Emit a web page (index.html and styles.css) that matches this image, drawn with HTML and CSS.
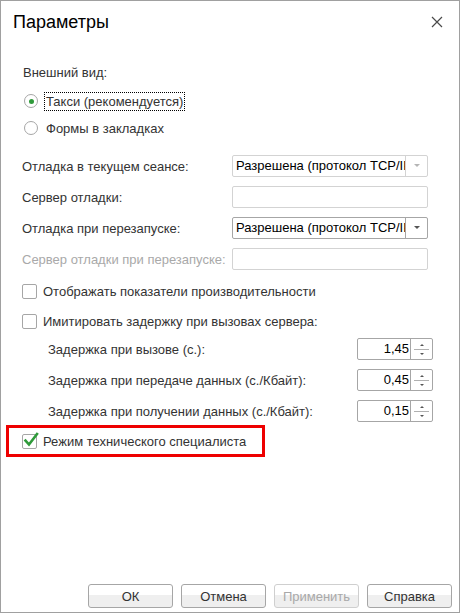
FILE: index.html
```html
<!DOCTYPE html>
<html lang="ru">
<head>
<meta charset="utf-8">
<title>Параметры</title>
<link rel="stylesheet" href="styles.css">
</head>
<body>
<div class="window">
  <div class="titlebar">
    <span class="title">Параметры</span>
    <span class="close">
      <svg width="12" height="12" viewBox="0 0 12 12"><path d="M1 1 L11 11 M11 1 L1 11" stroke="#4a4a4a" stroke-width="1.2" fill="none"/></svg>
    </span>
  </div>
  <div class="form">
    <div class="group-label">Внешний вид:</div>
    <div class="radio-row r1"><span class="radio checked"></span><span class="radio-text focus">Такси (рекомендуется)</span></div>
    <div class="radio-row r2"><span class="radio"></span><span class="radio-text">Формы в закладках</span></div>

    <div class="field-row first">
      <span class="field-label">Отладка в текущем сеансе:</span>
      <div class="combo light"><span class="combo-text">Разрешена (протокол TCP/IP)</span><span class="combo-btn"><span class="tri"></span></span></div>
    </div>
    <div class="field-row">
      <span class="field-label">Сервер отладки:</span>
      <div class="input"></div>
    </div>
    <div class="field-row">
      <span class="field-label">Отладка при перезапуске:</span>
      <div class="combo dark"><span class="combo-text">Разрешена (протокол TCP/IP)</span><span class="combo-btn"><span class="tri"></span></span></div>
    </div>
    <div class="field-row">
      <span class="field-label disabled">Сервер отладки при перезапуске:</span>
      <div class="input"></div>
    </div>

    <div class="check-row c1"><span class="checkbox"></span><span class="check-text">Отображать показатели производительности</span></div>
    <div class="check-row c2"><span class="checkbox"></span><span class="check-text">Имитировать задержку при вызовах сервера:</span></div>

    <div class="spin-row s1">
      <span class="spin-label">Задержка при вызове (с.):</span>
      <div class="spin"><span class="spin-val">1,45</span><span class="spin-btns"><span class="up"></span><span class="sep"></span><span class="down"></span></span></div>
    </div>
    <div class="spin-row">
      <span class="spin-label">Задержка при передаче данных (с./Кбайт):</span>
      <div class="spin"><span class="spin-val">0,45</span><span class="spin-btns"><span class="up"></span><span class="sep"></span><span class="down"></span></span></div>
    </div>
    <div class="spin-row">
      <span class="spin-label">Задержка при получении данных (с./Кбайт):</span>
      <div class="spin"><span class="spin-val">0,15</span><span class="spin-btns"><span class="up"></span><span class="sep"></span><span class="down"></span></span></div>
    </div>

    <div class="highlight">
      <span class="checkbox checked">
        <svg class="tick" width="16" height="16" viewBox="0 0 16 16"><path d="M2.5 8.5 L6 12.5 L14 2" stroke="#2f9a3a" stroke-width="2.6" fill="none" stroke-linecap="square"/></svg>
      </span>
      <span class="check-text">Режим технического специалиста</span>
    </div>
  </div>
  <div class="footer">
    <span class="btn">ОК</span>
    <span class="btn">Отмена</span>
    <span class="btn disabled">Применить</span>
    <span class="btn">Справка</span>
  </div>
</div>
</body>
</html>
```

FILE: styles.css
```css
html, body {
  margin: 0;
  padding: 0;
  background: #ffffff;
}

.window {
  width: 460px;
  height: 613px;
  box-sizing: border-box;
  border: 1px solid #a0a0a0;
  background: #ffffff;
  display: flex;
  flex-direction: column;
  font-family: "Liberation Sans", Arial, sans-serif;
  font-size: 13px;
  color: #333333;
}

.titlebar {
  height: 43px;
  display: flex;
  align-items: center;
  justify-content: space-between;
  padding: 0 16px 0 12px;
  flex: none;
}

.title {
  font-size: 18px;
  color: #000000;
  line-height: 22px;
  margin-top: -1px;
}

.close {
  display: flex;
  width: 12px;
  height: 12px;
  margin-top: -2px;
}

.form {
  display: flex;
  flex-direction: column;
  padding-left: 21px;
  flex: none;
}

.group-label {
  height: 16px;
  line-height: 16px;
  margin-top: 21px;
  padding-left: 1px;
}

.radio-row {
  height: 20px;
  display: flex;
  align-items: center;
}
.radio-row.r1 { margin-top: 10px; }
.radio-row.r2 { margin-top: 7px; }

.radio {
  width: 14px;
  height: 14px;
  box-sizing: border-box;
  border: 1px solid #a6a6a6;
  border-radius: 50%;
  margin-left: 2px;
  margin-right: 6px;
  display: flex;
  align-items: center;
  justify-content: center;
  background: #fff;
}
.radio.checked::after {
  content: "";
  width: 5px;
  height: 5px;
  border-radius: 50%;
  background: #2f9a3a;
}

.radio-text {
  line-height: 17px;
  padding: 0 1px;
  border: 1px solid transparent;
}
.radio-text.focus {
  border: 1px dotted #000;
}

.field-row {
  height: 22px;
  display: flex;
  align-items: center;
  margin-top: 9px;
}
.field-row.first { margin-top: 17px; }

.field-label {
  width: 210px;
  flex: none;
}
.field-label.disabled { color: #a9a9a9; }

.input, .combo {
  width: 196px;
  height: 22px;
  box-sizing: border-box;
  border: 1px solid #d3d3d3;
  border-radius: 2px;
  background: #fff;
}

.combo {
  display: flex;
  overflow: hidden;
}
.combo.dark { border-color: #a6a6a6; }

.combo-text {
  flex: 1;
  white-space: nowrap;
  overflow: hidden;
  padding-left: 3px;
  line-height: 20px;
  color: #000;
}

.combo-btn {
  width: 21px;
  flex: none;
  border-left: 1px solid #d3d3d3;
  display: flex;
  align-items: center;
  justify-content: center;
}
.combo.dark .combo-btn { border-left-color: #a6a6a6; }

.tri {
  width: 0;
  height: 0;
  border-left: 3px solid transparent;
  border-right: 3px solid transparent;
  border-top: 3px solid #b5b5b5;
  margin-top: -1px;
}
.combo.dark .tri { border-top-color: #555; }

.check-row {
  height: 16px;
  display: flex;
  align-items: center;
}
.check-row.c1 { margin-top: 13px; }
.check-row.c2 { margin-top: 14px; }

.checkbox {
  width: 15px;
  height: 15px;
  box-sizing: border-box;
  border: 1px solid #a6a6a6;
  border-radius: 2px;
  margin-right: 6px;
  flex: none;
  position: relative;
  background: #fff;
}

.tick {
  position: absolute;
  left: 0px;
  top: -3px;
}

.spin-row {
  height: 22px;
  display: flex;
  align-items: center;
  margin-top: 9px;
  padding-left: 26px;
}

.spin-label {
  width: 309px;
  flex: none;
}

.spin {
  width: 76px;
  height: 22px;
  box-sizing: border-box;
  border: 1px solid #a6a6a6;
  border-radius: 2px;
  display: flex;
  background: #fff;
}

.spin-val {
  flex: 1;
  text-align: right;
  line-height: 20px;
  padding-right: 1px;
  color: #000;
}

.spin-btns {
  width: 21px;
  flex: none;
  border-left: 1px solid #a6a6a6;
  display: flex;
  flex-direction: column;
  align-items: center;
  justify-content: center;
}
.spin-btns .up {
  width: 0;
  height: 0;
  border-left: 2px solid transparent;
  border-right: 2px solid transparent;
  border-bottom: 2px solid #555;
  margin-bottom: 3px;
}
.spin-btns .sep {
  width: 15px;
  height: 1px;
  background: #b0b0b0;
}
.spin-btns .down {
  width: 0;
  height: 0;
  border-left: 2px solid transparent;
  border-right: 2px solid transparent;
  border-top: 2px solid #555;
  margin-top: 3px;
}

.highlight {
  margin-top: 3px;
  margin-left: -16px;
  width: 259px;
  height: 32px;
  box-sizing: border-box;
  border: 3px solid #ee0000;
  display: flex;
  align-items: center;
  padding-left: 13px;
}

.footer {
  margin-top: auto;
  display: flex;
  justify-content: flex-end;
  gap: 8px;
  padding: 0 7px 4px 0;
}

.btn {
  width: 85px;
  height: 24px;
  box-sizing: border-box;
  border: 1px solid #a6a6a6;
  border-radius: 3px;
  background: linear-gradient(to bottom, #ffffff 0, #ffffff 10px, #efefef 10px, #efefef 100%);
  display: flex;
  align-items: center;
  justify-content: center;
  color: #333;
}
.btn.disabled {
  border-color: #cfcfcf;
  color: #a9a9a9;
}
```
